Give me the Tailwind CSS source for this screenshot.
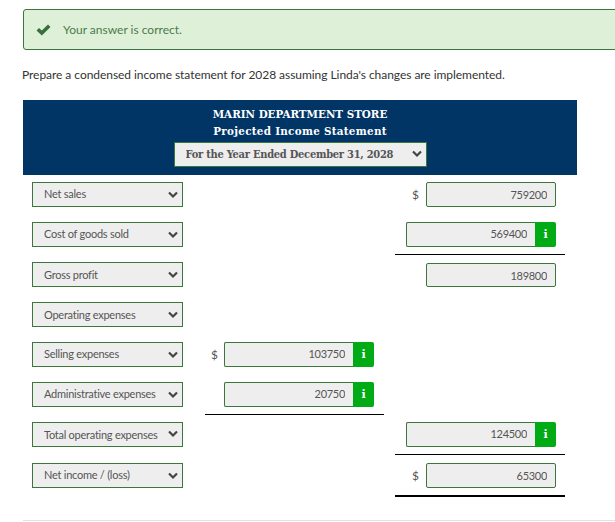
<!DOCTYPE html>
<html lang="en">
<head>
  <meta charset="UTF-8">
  <meta name="viewport" content="width=device-width, initial-scale=1.0">
  <title>Income statement</title>
  <script src="https://cdn.jsdelivr.net/npm/@tailwindcss/browser@4"></script>
</head>
<body class="bg-white h-[522px] overflow-hidden font-['Lato',sans-serif] text-[#555]">
<main class="pl-[23px] pt-[9px] w-[615px]">
  <div class="w-[600px] h-[41px] flex items-center border border-[#3c763d] rounded-[3px] bg-[#dff0d8] text-[#4a7a4b] text-[12px]">
    <svg class="ml-[12px] w-[15px] h-[12px]" viewBox="0 0 15 12"><path d="M0.5 6.5 L3 4 L5.8 6.6 L12 0.5 L14.5 3 L5.8 11.5 Z" fill="#37703a"/></svg>
    <span class="ml-[12px]">Your answer is correct.</span>
  </div>
  <p class="mt-[17px] text-[12px] tracking-[-0.05px] leading-[16px] text-[#333] -ml-px">Prepare a condensed income statement for 2028 assuming Linda's changes are implemented.</p>

  <div class="mt-[17px] w-[554px] h-[75px] bg-[#003565] flex flex-col items-center pt-[6px] text-white font-['DejaVu_Serif_Condensed','DejaVu_Serif',serif] font-bold text-[11.5px] leading-[17px]">
    <div>MARIN DEPARTMENT STORE</div>
    <div class="tracking-[0.3px]">Projected Income Statement</div>
    <div class="relative mt-[2px] w-[253px] h-[25px]">
      <select class="block appearance-none w-full h-full border border-[#3c763d] bg-[#eee] text-[#555] pl-[11px] text-[11px] tracking-[-0.25px]"><option>For the Year Ended December 31, 2028</option></select>
      <svg class="absolute right-[4px] top-[8px] w-[12px] h-[8px]" viewBox="0 0 12 8"><path d="M2 1.5 L6 5.5 L10 1.5" fill="none" stroke="#444" stroke-width="2.2"/></svg>
    </div>
  </div>

  <div class="mt-[7px] pl-[9px]">
    <!-- net sales -->
    <div class="flex h-[40px]">
      <div class="relative w-[151px] h-[25px]">
        <select class="block appearance-none w-full h-full border border-[#3c763d] bg-[#eee] text-[#555] pl-[11px] text-[11px] tracking-[-0.25px]"><option>Net sales</option></select>
        <svg class="absolute right-[4px] top-[9px] w-[12px] h-[8px]" viewBox="0 0 12 8"><path d="M2 1.5 L6 5.5 L10 1.5" fill="none" stroke="#444" stroke-width="2.2"/></svg>
      </div>
      <div class="w-[212px]"></div>
      <div class="w-[170px] flex justify-end pr-[9px]">
        <span class="mr-[7px] text-[12px] leading-[25px]">$</span>
        <input readonly value="759200" class="w-[130px] h-[25px] border border-[#3c763d] rounded-[2px] bg-[#eee] text-right pr-[8px] text-[11px] tracking-[-0.3px] text-[#555]">
      </div>
    </div>
    <!-- cogs -->
    <div class="flex h-[40px]">
      <div class="relative w-[151px] h-[25px]">
        <select class="block appearance-none w-full h-full border border-[#3c763d] bg-[#eee] text-[#555] pl-[11px] text-[11px] tracking-[-0.25px]"><option>Cost of goods sold</option></select>
        <svg class="absolute right-[4px] top-[9px] w-[12px] h-[8px]" viewBox="0 0 12 8"><path d="M2 1.5 L6 5.5 L10 1.5" fill="none" stroke="#444" stroke-width="2.2"/></svg>
      </div>
      <div class="w-[212px]"></div>
      <div class="w-[170px] h-[33px] border-b border-black flex justify-end pr-[9px]">
        <div class="flex w-[150px] h-[25px]">
          <input readonly value="569400" class="min-w-0 flex-1 border border-r-0 border-[#3c763d] rounded-l-[2px] bg-[#eee] text-right pr-[8px] text-[11px] tracking-[-0.3px] text-[#555]">
          <span class="w-[21px] bg-[#00ab16] rounded-r-[2px] text-white font-['DejaVu_Serif',serif] font-bold text-[11px] leading-[25px] text-center">i</span>
        </div>
      </div>
    </div>
    <!-- gross profit -->
    <div class="flex h-[40px]">
      <div class="relative w-[151px] h-[25px]">
        <select class="block appearance-none w-full h-full border border-[#3c763d] bg-[#eee] text-[#555] pl-[11px] pt-px text-[11px] tracking-[-0.25px]"><option>Gross profit</option></select>
        <svg class="absolute right-[4px] top-[9px] w-[12px] h-[8px]" viewBox="0 0 12 8"><path d="M2 1.5 L6 5.5 L10 1.5" fill="none" stroke="#444" stroke-width="2.2"/></svg>
      </div>
      <div class="w-[212px]"></div>
      <div class="w-[170px] flex justify-end pr-[9px]">
        <input readonly value="189800" class="mt-px w-[130px] h-[24px] border border-[#3c763d] rounded-[2px] bg-[#eee] text-right pr-[8px] text-[11px] tracking-[-0.3px] text-[#555]">
      </div>
    </div>
    <!-- operating expenses -->
    <div class="flex h-[40px]">
      <div class="relative w-[151px] h-[25px]">
        <select class="block appearance-none w-full h-full border border-[#3c763d] bg-[#eee] text-[#555] pl-[11px] pt-px text-[11px] tracking-[-0.25px]"><option>Operating expenses</option></select>
        <svg class="absolute right-[4px] top-[9px] w-[12px] h-[8px]" viewBox="0 0 12 8"><path d="M2 1.5 L6 5.5 L10 1.5" fill="none" stroke="#444" stroke-width="2.2"/></svg>
      </div>
    </div>
    <!-- selling -->
    <div class="flex h-[40px]">
      <div class="relative w-[151px] h-[25px]">
        <select class="block appearance-none w-full h-full border border-[#3c763d] bg-[#eee] text-[#555] pl-[11px] text-[11px] tracking-[-0.25px]"><option>Selling expenses</option></select>
        <svg class="absolute right-[4px] top-[9px] w-[12px] h-[8px]" viewBox="0 0 12 8"><path d="M2 1.5 L6 5.5 L10 1.5" fill="none" stroke="#444" stroke-width="2.2"/></svg>
      </div>
      <div class="w-[179px] ml-[22px] flex justify-end pr-[10px]">
        <span class="mr-[6px] text-[12px] leading-[25px]">$</span>
        <div class="flex w-[150px] h-[25px]">
          <input readonly value="103750" class="min-w-0 flex-1 border border-r-0 border-[#3c763d] rounded-l-[2px] bg-[#eee] text-right pr-[8px] text-[11px] tracking-[-0.3px] text-[#555]">
          <span class="w-[21px] bg-[#00ab16] rounded-r-[2px] text-white font-['DejaVu_Serif',serif] font-bold text-[11px] leading-[25px] text-center">i</span>
        </div>
      </div>
    </div>
    <!-- admin -->
    <div class="flex h-[40px]">
      <div class="relative w-[151px] h-[25px]">
        <select class="block appearance-none w-full h-full border border-[#3c763d] bg-[#eee] text-[#555] pl-[11px] text-[11px] tracking-[-0.25px]"><option>Administrative expenses</option></select>
        <svg class="absolute right-[4px] top-[9px] w-[12px] h-[8px]" viewBox="0 0 12 8"><path d="M2 1.5 L6 5.5 L10 1.5" fill="none" stroke="#444" stroke-width="2.2"/></svg>
      </div>
      <div class="w-[179px] ml-[22px] h-[33px] border-b border-black flex justify-end pr-[10px]">
        <div class="flex w-[150px] h-[25px]">
          <input readonly value="20750" class="min-w-0 flex-1 border border-r-0 border-[#3c763d] rounded-l-[2px] bg-[#eee] text-right pr-[8px] text-[11px] tracking-[-0.3px] text-[#555]">
          <span class="w-[21px] bg-[#00ab16] rounded-r-[2px] text-white font-['DejaVu_Serif',serif] font-bold text-[11px] leading-[25px] text-center">i</span>
        </div>
      </div>
    </div>
    <!-- total operating -->
    <div class="flex h-[41px]">
      <div class="relative w-[151px] h-[25px]">
        <select class="block appearance-none w-full h-full border border-[#3c763d] bg-[#eee] text-[#555] pl-[11px] pt-px text-[11px] tracking-[-0.25px]"><option>Total operating expenses</option></select>
        <svg class="absolute right-[4px] top-[8px] w-[12px] h-[8px]" viewBox="0 0 12 8"><path d="M2 1.5 L6 5.5 L10 1.5" fill="none" stroke="#444" stroke-width="2.2"/></svg>
      </div>
      <div class="w-[212px]"></div>
      <div class="w-[170px] h-[33px] border-b border-black flex justify-end pr-[9px]">
        <div class="flex w-[150px] h-[25px]">
          <input readonly value="124500" class="min-w-0 flex-1 border border-r-0 border-[#3c763d] rounded-l-[2px] bg-[#eee] text-right pr-[8px] text-[11px] tracking-[-0.3px] text-[#555]">
          <span class="w-[21px] bg-[#00ab16] rounded-r-[2px] text-white font-['DejaVu_Serif',serif] font-bold text-[11px] leading-[25px] text-center">i</span>
        </div>
      </div>
    </div>
    <!-- net income -->
    <div class="flex h-[40px]">
      <div class="relative w-[151px] h-[25px]">
        <select class="block appearance-none w-full h-full border border-[#3c763d] bg-[#eee] text-[#555] pl-[11px] text-[11px] tracking-[-0.25px]"><option>Net income / (loss)</option></select>
        <svg class="absolute right-[4px] top-[9px] w-[12px] h-[8px]" viewBox="0 0 12 8"><path d="M2 1.5 L6 5.5 L10 1.5" fill="none" stroke="#444" stroke-width="2.2"/></svg>
      </div>
      <div class="w-[212px]"></div>
      <div class="w-[170px] h-[34px] border-b-2 border-black flex justify-end pr-[9px]">
        <span class="mr-[7px] text-[12px] leading-[25px]">$</span>
        <input readonly value="65300" class="w-[130px] h-[25px] border border-[#3c763d] rounded-[2px] bg-[#eee] text-right pr-[8px] text-[11px] tracking-[-0.3px] text-[#555]">
      </div>
    </div>
  </div>
  <hr class="mt-[17px] border-[#e2e2e2] w-[592px]">
</main>
</body>
</html>
